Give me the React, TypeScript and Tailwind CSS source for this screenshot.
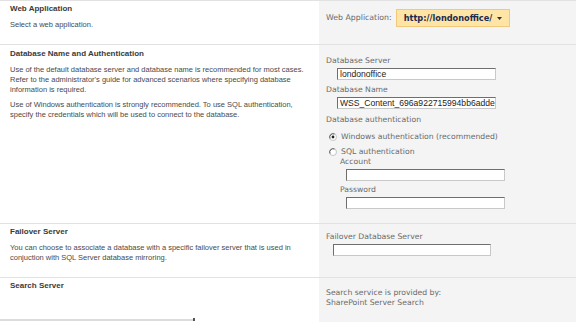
import React from "react";

const L = { fontFamily: '"Liberation Sans", Arial, sans-serif' };
const R = { fontFamily: '"DejaVu Sans", Verdana, sans-serif' };

function Input({ value, w = 159 }: { value?: string; w?: number }) {
  return (
    <div
      className="h-[12px] bg-white border border-t-[#6e6e6e] border-l-[#6e6e6e] border-r-[#c8c8c8] border-b-[#c8c8c8] overflow-hidden whitespace-nowrap text-[8.6px] leading-[10px] text-[#222] pl-[2px]"
      style={{ width: w, fontFamily: '"Liberation Sans", Arial, sans-serif' }}
    >
      {value}
    </div>
  );
}

function Radio({ checked }: { checked?: boolean }) {
  return (
    <svg width="8" height="8" viewBox="0 0 8 8" className="shrink-0">
      <circle cx="4" cy="4" r="3.5" fill="#fff" stroke="#b8b8b8" strokeWidth="0.8" />
      <path d="M1 5.5 A3.4 3.4 0 0 1 5.5 1" fill="none" stroke="#555" strokeWidth="1" />
      {checked && <circle cx="4" cy="4" r="1.4" fill="#222" />}
    </svg>
  );
}

function Row({ left, right, h }: { left: React.ReactNode; right: React.ReactNode; h: number }) {
  return (
    <div className="flex border-t border-[#e2e2e2]" style={{ height: h }}>
      <div className="w-[319px] shrink-0 bg-white pl-[10px] pr-[8px] flex flex-col" style={L}>
        {left}
      </div>
      <div className="flex-1 bg-[#f4f4f4] pl-[7px]" style={R}>
        {right}
      </div>
    </div>
  );
}

export default function App() {
  return (
    <div className="w-[576px] h-[322px] overflow-hidden bg-white">
      <Row
        h={44}
        left={
          <>
            <div className="mt-[3px] text-[8px] leading-[10px] font-bold text-[#3a3a3a]">Web Application</div>
            <div className="mt-[6px] text-[7.5px] leading-[10px] text-[#4a4a4a]">Select a web application.</div>
          </>
        }
        right={
          <div className="flex items-center mt-[8px] gap-[4px]">
            <span className="text-[7.8px] text-[#6a6a6a]">Web Application:</span>
            <div className="h-[18px] w-[114px] flex items-center pl-[7px] gap-[5px] border border-[#f2c97a] bg-[#fee5a5]">
              <span className="text-[8.2px] font-bold text-[#1a2a50]">http://londonoffice/</span>
              <svg width="5" height="3" viewBox="0 0 5 3"><path d="M0 0h5L2.5 3z" fill="#333" /></svg>
            </div>
          </div>
        }
      />
      <Row
        h={179}
        left={
          <>
            <div className="mt-[4px] text-[8px] leading-[10px] font-bold text-[#3a3a3a]">Database Name and Authentication</div>
            <div className="mt-[6px] text-[7.5px] leading-[10px] text-[#4a4a4a]">
              Use of the default database server and database name is recommended for most cases. Refer to the administrator's guide for advanced scenarios where specifying database information is required.
            </div>
            <div className="mt-[5px] text-[7.5px] leading-[10px] text-[#4a4a4a]">
              Use of Windows authentication is strongly recommended. To use SQL authentication, specify the credentials which will be used to connect to the database.
            </div>
          </>
        }
        right={
          <div className="flex flex-col text-[7.7px] leading-[10px] text-[#6a6a6a]">
            <div className="mt-[11px]">Database Server</div>
            <div className="ml-[11px] mt-[2px]"><Input value="londonoffice" /></div>
            <div className="mt-[5px]">Database Name</div>
            <div className="ml-[11px] mt-[2px]"><Input value="WSS_Content_696a922715994bb6adde" /></div>
            <div className="mt-[6px]">Database authentication</div>
            <div className="flex items-center gap-[4px] ml-[3px] mt-[7px]"><Radio checked /><span>Windows authentication (recommended)</span></div>
            <div className="flex items-center gap-[4px] ml-[3px] mt-[5px]"><Radio /><span>SQL authentication</span></div>
            <div className="ml-[14px]">Account</div>
            <div className="ml-[20px] mt-[2px]"><Input /></div>
            <div className="ml-[14px] mt-[4px]">Password</div>
            <div className="ml-[20px] mt-[2px]"><Input /></div>
          </div>
        }
      />
      <Row
        h={54}
        left={
          <>
            <div className="mt-[3px] text-[8px] leading-[10px] font-bold text-[#3a3a3a]">Failover Server</div>
            <div className="mt-[6px] text-[7.5px] leading-[10px] text-[#4a4a4a]">
              You can choose to associate a database with a specific failover server that is used in conjuction with SQL Server database mirroring.
            </div>
          </>
        }
        right={
          <div className="flex flex-col text-[7.7px] leading-[10px] text-[#6a6a6a]">
            <div className="mt-[8px]">Failover Database Server</div>
            <div className="ml-[7px] mt-[2px]"><Input w={158} /></div>
          </div>
        }
      />
      <Row
        h={45}
        left={
          <>
            <div className="mt-[3px] text-[8px] leading-[10px] font-bold text-[#3a3a3a]">Search Server</div>
            <div className="mt-auto -ml-[10px] mb-[1px] flex items-center">
              <div className="w-[193px] h-[2px] bg-[#dcdcdc]" />
              <div className="w-[2px] h-[3px] bg-[#555]" />
            </div>
          </>
        }
        right={
          <div className="flex flex-col text-[7.7px] leading-[10px] text-[#6a6a6a]">
            <div className="mt-[10px]">Search service is provided by:</div>
            <div>SharePoint Server Search</div>
          </div>
        }
      />
    </div>
  );
}
